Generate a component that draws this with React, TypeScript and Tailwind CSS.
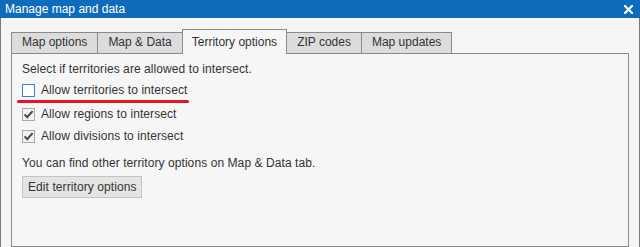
import React from "react";

const tabs = ["Map options", "Map & Data", "Territory options", "ZIP codes", "Map updates"];
const active = 2;

function Check({ checked }: { checked: boolean }) {
  if (!checked) {
    return <div className="w-[13px] h-[13px] border border-[#2f86e0] bg-white shrink-0" />;
  }
  return (
    <div className="w-[13px] h-[13px] border border-[#a9a9a9] bg-[#f2f2f2] shrink-0 relative">
      <svg width="13" height="13" viewBox="0 0 13 13" className="absolute -left-px -top-px">
        <path d="M2.6 6.4 L5.2 9.2 L10.6 3.1" fill="none" stroke="#4a4a4a" strokeWidth="2.1" />
      </svg>
    </div>
  );
}

export default function App() {
  return (
    <div
      className="w-[640px] h-[247px] overflow-hidden bg-white text-[12px] text-[#333333] flex flex-col"
      style={{ fontFamily: '"Liberation Sans", Arial, sans-serif' }}
    >
      <div className="h-[18px] bg-[#0f6cbd] flex items-center justify-between pl-[5px] pr-[6px] shrink-0">
        <span className="text-white text-[12px] leading-[18px]">Manage map and data</span>
        <svg width="9" height="9" viewBox="0 0 9 9" className="mr-[1px]">
          <path d="M1 1 L8 8 M8 1 L1 8" stroke="white" strokeWidth="2.2" strokeLinecap="square" />
        </svg>
      </div>
      <div className="flex-1 bg-[#f5f5f5] border-l border-r border-[#7a7a7a] pl-[10px] pr-[10px] pt-[11px] flex flex-col">
        <div className="flex items-end h-[24px] relative z-10">
          {tabs.map((t, i) => (
            <div
              key={t}
              className={
                i === active
                  ? "h-[25px] -mb-px pt-[3px] px-[9px] border border-b-0 border-[#8a8a8a] bg-[#f6f6f6] leading-[18px] -ml-px"
                  : "h-[21px] px-[10px] border border-b-0 border-[#8a8a8a] bg-[#dcdcdc] leading-[19px] " + (i === 0 ? "" : "-ml-px")
              }
            >
              {t}
            </div>
          ))}
        </div>
        <div className="flex-1 border border-[#8a8a8a] bg-[#f6f6f6] pl-[10px] pt-[7px] relative tracking-[0.08px]">
          <div className="leading-[16px]">Select if territories are allowed to intersect.</div>
          <div className="flex items-center gap-[6px] h-[13px] mt-[7px] leading-[13px]">
            <Check checked={false} />
            <span>Allow territories to intersect</span>
          </div>
          <div className="flex items-center gap-[6px] h-[13px] mt-[11px] leading-[13px]">
            <Check checked={true} />
            <span>Allow regions to intersect</span>
          </div>
          <div className="flex items-center gap-[6px] h-[13px] mt-[9px] leading-[13px]">
            <Check checked={true} />
            <span>Allow divisions to intersect</span>
          </div>
          <div className="leading-[16px] mt-[12px]">You can find other territory options on Map &amp; Data tab.</div>
          <button className="mt-[5px] h-[22px] px-[5px] border border-[#c4c4c4] bg-[#e4e4e4] text-[#333333] leading-[20px] tracking-[0.08px]">
            Edit territory options
          </button>
          <div className="absolute left-[5px] top-[46px] w-[172px] h-[3px] rounded-full bg-[#e8131e]" />
        </div>
      </div>
    </div>
  );
}
